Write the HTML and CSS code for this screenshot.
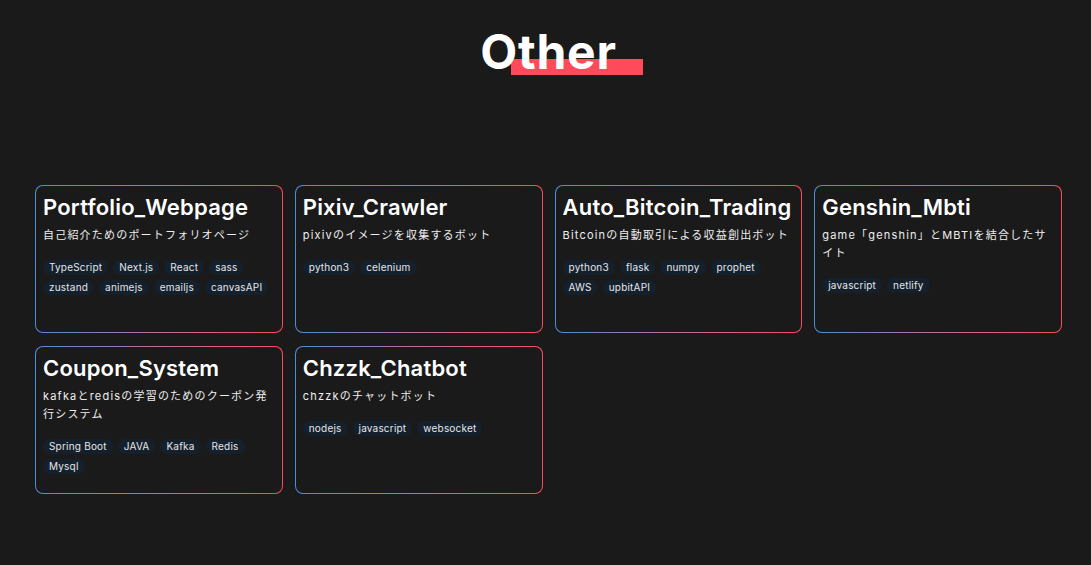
FILE: index.html
```html
<!DOCTYPE html>
<html lang="ja">
<head>
    <meta charset="UTF-8">
    <meta name="viewport" content="width=device-width, initial-scale=1.0">
    <title>Other</title>
    <link rel="stylesheet" href="styles.css">
</head>
<body>
    <section class="other">
        <div class="heading">
            <h2>Other</h2>
        </div>

        <div class="project-grid">
            <div class="project-card">
                <h3>Portfolio_Webpage</h3>
                <p>自己紹介ためのポートフォリオページ</p>
                <ul class="tags">
                    <li>TypeScript</li>
                    <li>Next.js</li>
                    <li>React</li>
                    <li>sass</li>
                    <li>zustand</li>
                    <li>animejs</li>
                    <li>emailjs</li>
                    <li>canvasAPI</li>
                </ul>
            </div>

            <div class="project-card">
                <h3>Pixiv_Crawler</h3>
                <p>pixivのイメージを収集するボット</p>
                <ul class="tags">
                    <li>python3</li>
                    <li>celenium</li>
                </ul>
            </div>

            <div class="project-card">
                <h3>Auto_Bitcoin_Trading</h3>
                <p>Bitcoinの自動取引による収益創出ボット</p>
                <ul class="tags">
                    <li>python3</li>
                    <li>flask</li>
                    <li>numpy</li>
                    <li>prophet</li>
                    <li>AWS</li>
                    <li>upbitAPI</li>
                </ul>
            </div>

            <div class="project-card">
                <h3>Genshin_Mbti</h3>
                <p>game「genshin」とMBTIを結合したサイト</p>
                <ul class="tags">
                    <li>javascript</li>
                    <li>netlify</li>
                </ul>
            </div>

            <div class="project-card">
                <h3>Coupon_System</h3>
                <p>kafkaとredisの学習のためのクーポン発行システム</p>
                <ul class="tags">
                    <li>Spring Boot</li>
                    <li>JAVA</li>
                    <li>Kafka</li>
                    <li>Redis</li>
                    <li>Mysql</li>
                </ul>
            </div>

            <div class="project-card">
                <h3>Chzzk_Chatbot</h3>
                <p>chzzkのチャットボット</p>
                <ul class="tags">
                    <li>nodejs</li>
                    <li>javascript</li>
                    <li>websocket</li>
                </ul>
            </div>
        </div>
    </section>
</body>
</html>
```

FILE: styles.css
```css
body {
    margin: 0;
    background: #1a1a1a;
    color: #f5f5f5;
    font-family: Inter, "Noto Sans", "Noto Sans CJK JP", sans-serif;
}
.other {
    padding: 26px 29px 0 35px;
}
.heading {
    text-align: center;
    height: 159px;
}
.heading h2 {
    position: relative;
    display: inline-block;
    margin: 0;
    font-size: 48px;
    font-weight: 700;
    line-height: 52px;
    letter-spacing: 0.8px;
    color: #fff;
    z-index: 0;
}
.heading h2::after {
    content: "";
    position: absolute;
    left: 31px;
    top: 33px;
    width: 132px;
    height: 16px;
    background: #ff4a5a;
    z-index: -1;
}
.project-grid {
    display: grid;
    grid-template-columns: repeat(4, 1fr);
    column-gap: 12px;
    row-gap: 13px;
}
.project-card {
    height: 148px;
    box-sizing: border-box;
    padding: 8px 7px;
    border: 1px solid transparent;
    border-radius: 8px;
    background:
        linear-gradient(#1a1a1a, #1a1a1a) padding-box,
        linear-gradient(to right, #4a8fd8, #c06a9a 50%, #ff4a5a) border-box;
}
.project-card h3 {
    margin: 0;
    font-size: 22px;
    font-weight: 600;
    line-height: 26px;
    letter-spacing: 0.2px;
    color: #fff;
}
.project-card p {
    margin: 6px 0 0;
    font-size: 11px;
    line-height: 18px;
    letter-spacing: 1.2px;
    color: #eee;
}
.tags {
    list-style: none;
    margin: 16px 0 0;
    padding: 0;
    display: flex;
    flex-wrap: wrap;
    gap: 5px 5px;
}
.tags li {
    background: #15202d;
    color: #e6e6e6;
    font-size: 10px;
    line-height: 15px;
    letter-spacing: 0.2px;
    padding: 0 6px;
    border-radius: 8px;
}
```
